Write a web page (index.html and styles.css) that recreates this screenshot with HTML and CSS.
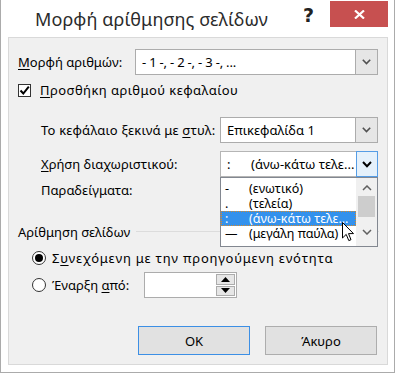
FILE: index.html
```html
<!DOCTYPE html>
<html lang="el">
<head>
<meta charset="utf-8">
<link rel="stylesheet" href="styles.css">
</head>
<body>
<div class="window">
  <div class="titlebar">
    <div class="title">Μορφή αρίθμησης σελίδων</div>
    <div class="help">?</div>
    <div class="close">
      <svg width="11" height="9" viewBox="0 0 11 9"><path d="M1 0.5 L10 8.5 M10 0.5 L1 8.5" stroke="#fff" stroke-width="2.2"/></svg>
    </div>
  </div>
  <div class="panel">
    <div class="row r1">
      <span class="lbl lbl-num"><u>Μ</u>ορφή αριθμών:</span>
      <div class="combo combo-num">
        <span class="val val-num">- 1 -, - 2 -, - 3 -, ...</span>
        <span class="btn"><svg width="9" height="6" viewBox="0 0 9 6"><path d="M0.8 0.8 L4.5 4.6 L8.2 0.8" fill="none" stroke="#505050" stroke-width="1.6"/></svg></span>
      </div>
    </div>
    <div class="row r2">
      <span class="check"><svg width="11" height="11" viewBox="0 0 11 11"><path d="M1.5 5.5 L4.3 8.5 L9.8 1.6" fill="none" stroke="#000" stroke-width="2"/></svg></span>
      <span class="lbl sp-add"><u>Π</u>ροσθήκη αριθμού κεφαλαίου</span>
    </div>
    <div class="row r3">
      <span class="lbl lbl-ind sp-style">Το κεφάλαιο ξεκινά με <u>σ</u>τυλ:</span>
      <div class="combo combo-sm">
        <span class="val">Επικεφαλίδα 1</span>
        <span class="btn"><svg width="9" height="6" viewBox="0 0 9 6"><path d="M0.8 0.8 L4.5 4.6 L8.2 0.8" fill="none" stroke="#505050" stroke-width="1.6"/></svg></span>
      </div>
    </div>
    <div class="row r4">
      <span class="lbl lbl-ind"><u>Χ</u>ρήση διαχωριστικού:</span>
      <div class="combo combo-sm combo-open">
        <span class="val"><span class="sym">:</span>(άνω-κάτω τελε...</span>
        <span class="btn btn-focus"><svg width="10" height="7" viewBox="0 0 10 7"><path d="M1 1 L5 5.2 L9 1" fill="none" stroke="#000" stroke-width="2"/></svg></span>
        <div class="list">
          <div class="items">
            <div class="item"><span class="sym">-</span>(ενωτικό)</div>
            <div class="item"><span class="sym">.</span>(τελεία)</div>
            <div class="item sel"><span class="sym">:</span>(άνω-κάτω τελε...</div>
            <div class="item"><span class="sym">—</span>(μεγάλη παύλα)</div>
          </div>
          <div class="scroll">
            <svg width="10" height="6" viewBox="0 0 10 6"><path d="M1 5 L5 1 L9 5" fill="none" stroke="#606060" stroke-width="1.5"/></svg>
            <div class="thumb"></div>
            <svg width="10" height="6" viewBox="0 0 10 6"><path d="M1 1 L5 5 L9 1" fill="none" stroke="#606060" stroke-width="1.5"/></svg>
          </div>
        </div>
        <svg class="cursor" width="13" height="20" viewBox="0 0 13 20"><path d="M0.5 0.5 L0.5 16 L4.2 12.4 L6.8 18.6 L9 17.7 L6.5 11.6 L11.5 11.6 Z" fill="#fff" stroke="#000" stroke-width="1"/></svg>
      </div>
    </div>
    <div class="row r5">
      <span class="lbl lbl-ind">Παραδείγματα:</span>
    </div>
    <div class="row group">
      <span class="lbl">Αρίθμηση σελίδων</span>
      <span class="gline"></span>
    </div>
    <div class="row rad1">
      <span class="radio on"><span class="dot"></span></span>
      <span class="lbl sp-cont">Σ<u>υ</u>νεχόμενη με την προηγούμενη ενότητα</span>
    </div>
    <div class="row rad2">
      <span class="radio"></span>
      <span class="lbl lbl-start">Έναρξη <u>α</u>πό:</span>
      <div class="spin">
        <span class="spin-field"></span>
        <span class="spin-btns">
          <span class="sb"><svg width="9" height="5" viewBox="0 0 9 5"><path d="M0 5 L4.5 0 L9 5 Z" fill="#000"/></svg></span>
          <span class="sb"><svg width="9" height="5" viewBox="0 0 9 5"><path d="M0 0 L4.5 5 L9 0 Z" fill="#000"/></svg></span>
        </span>
      </div>
    </div>
    <div class="buttons">
      <button class="b ok">OK</button>
      <button class="b">Άκυρο</button>
    </div>
  </div>
</div>
</body>
</html>
```

FILE: styles.css
```css
* { box-sizing: border-box; }
html, body { margin: 0; padding: 0; background: #fff; }
body {
  font-family: "Noto Sans", "Open Sans", sans-serif;
  font-size: 13px;
  color: #000;
}
u { text-decoration: underline; text-underline-offset: 2px; }

.window {
  width: 395px;
  height: 373px;
  border: 1px solid #ababab;
  border-top: none;
  background: #fff;
}

.titlebar {
  height: 37px;
  display: flex;
  align-items: flex-start;
}
.title {
  font-size: 18px;
  color: #2b2b2b;
  margin-left: 34px;
  margin-top: 7px;
  letter-spacing: 0.1px;
}
.help {
  margin-left: auto;
  margin-top: 4px;
  font-weight: bold;
  font-size: 19px;
  color: #222;
  font-family: "DejaVu Sans", sans-serif;
}
.close {
  margin-left: 16px;
  margin-right: 6px;
  margin-top: 1px;
  width: 58px;
  height: 26px;
  background: #c75050;
  display: flex;
  align-items: center;
  justify-content: center;
}

.panel {
  margin: 0 6px 0 7px;
  height: 328px;
  background: #f0f0f0;
  border: 1px solid #d9d9d9;
  padding: 0 0 0 9px;
  display: flex;
  flex-direction: column;
}

.row { display: flex; align-items: center; }
.lbl { white-space: nowrap; }
.sp-add { letter-spacing: 0.45px; }
.sp-style { letter-spacing: 0.2px; }
.sp-cont { letter-spacing: 0.8px; }

.r1 { margin-top: 11px; height: 26px; }
.lbl-num { width: 117px; }
.combo {
  position: relative;
  height: 26px;
  background: #fff;
  border: 1px solid #acacac;
  display: flex;
  align-items: center;
}
.combo .val { flex: 1; padding-left: 6px; white-space: nowrap; overflow: hidden; }
.combo .val-num { letter-spacing: -0.2px; }
.combo-num { width: 243px; }
.combo .btn {
  width: 22px;
  height: 100%;
  background: #e6e6e6;
  border-left: 1px solid #acacac;
  display: flex;
  align-items: center;
  justify-content: center;
}

.r2 { margin-top: 5px; height: 20px; }
.check {
  width: 13px; height: 13px;
  border: 1px solid #333;
  background: #fff;
  display: flex; align-items: center; justify-content: center;
  margin-right: 9px;
}

.r3 { margin-top: 17px; height: 26px; padding-left: 23px; }
.lbl-ind { width: 179px; }
.combo-sm { width: 158px; }

.r4 { margin-top: 8px; height: 26px; padding-left: 23px; }
.combo-open { border-color: #b5b5b5; }
.combo .btn-focus {
  background: #e5f1fb;
  border: 1px solid #569de5;
  margin-right: -1px;
  height: 26px;
}
.sym { display: inline-block; width: 24px; }

.list {
  position: absolute;
  left: -1px;
  top: calc(100% + 1px);
  width: 158px;
  height: 70px;
  background: #fff;
  border: 1px solid #828790;
  display: flex;
  z-index: 2;
}
.items { flex: 1; padding-top: 3px; font-size: 12.5px; min-width: 0; }
.item {
  height: 15px;
  line-height: 15px;
  padding-left: 4px;
  white-space: nowrap;
}
.item.sel {
  background: #3391ec;
  color: #fff;
  outline: 1px dotted #d88a2a;
  outline-offset: -1px;
}
.scroll {
  width: 21px;
  flex: none;
  background: #f0f0f0;
  display: flex;
  flex-direction: column;
  align-items: center;
  padding-top: 7px;
}
.thumb {
  width: 17px;
  height: 21px;
  background: #cdcdcd;
  margin: 5px 0 12px;
}
.cursor {
  position: absolute;
  left: 121px;
  top: 70px;
  z-index: 3;
}

.r5 { margin-top: 3px; height: 20px; padding-left: 23px; }

.group { margin-top: 22px; height: 20px; }
.gline {
  flex: 1;
  height: 1px;
  background: #dcdcdc;
  margin-left: 6px;
  margin-right: 8px;
  margin-top: -2px;
}

.rad1 { margin-top: 6px; height: 20px; padding-left: 14px; }
.radio {
  width: 14px; height: 14px;
  border-radius: 50%;
  border: 1px solid #333;
  background: #fff;
  margin-right: 6px;
  display: flex; align-items: center; justify-content: center;
}
.radio .dot { width: 8px; height: 8px; border-radius: 50%; background: #000; }

.rad2 { margin-top: 4px; height: 26px; padding-left: 14px; }
.lbl-start { width: 92px; }
.spin {
  width: 93px;
  height: 26px;
  border: 1px solid #acacac;
  background: #fff;
  display: flex;
  padding: 1px;
}
.spin-field { flex: 1; }
.spin-btns { width: 19px; display: flex; flex-direction: column; gap: 1px; }
.sb {
  flex: 1;
  background: #e6e6e6;
  border: 1px solid #acacac;
  display: flex; align-items: center; justify-content: center;
}

.buttons {
  margin-top: 28px;
  display: flex;
  justify-content: flex-end;
  gap: 15px;
  padding-right: 10px;
}
.b {
  width: 112px;
  height: 29px;
  font-family: inherit;
  font-size: 13px;
  color: #000;
  background: #e1e1e1;
  border: 1px solid #adadad;
  padding: 0;
}
.b.ok { border-color: #3c8fe5; }
```
